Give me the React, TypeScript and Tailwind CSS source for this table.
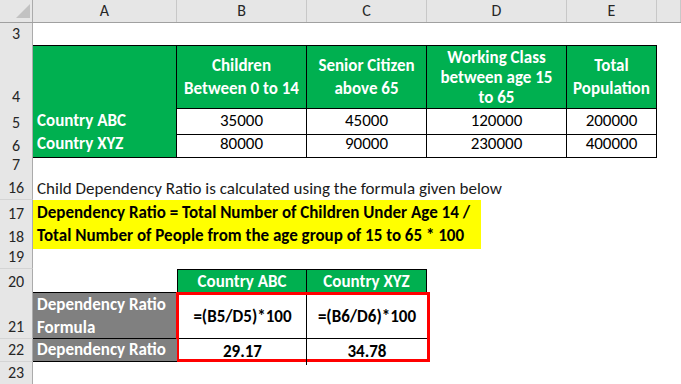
const COLS = 'grid grid-cols-[33px_144px_130px_120px_140px_90px_1fr]';
const FONT = "font-['Carlito','Lato',sans-serif]";

function RowNum({ n, className = '' }: { n?: string; className?: string }) {
  return (
    <div className={`flex items-end justify-center bg-[#e6e6e6] border-r border-b border-r-[#ababab] border-b-[#d4d4d4] text-[16px] leading-[22px] text-[#262626] ${className}`}>
      {n}
    </div>
  );
}

function Green({ children, className = '' }: { children?: React.ReactNode; className?: string }) {
  return (
    <div className={`flex items-center justify-center text-center bg-[#00b050] text-white font-bold border-r border-b border-black leading-[23px] ${className}`}>
      {children}
    </div>
  );
}

function Num({ children }: { children: React.ReactNode }) {
  return <div className="flex items-center justify-center border-r border-b border-black text-black">{children}</div>;
}

export default function App() {
  return (
    <div className={`w-[681px] h-[384px] overflow-hidden bg-white text-[17px] ${FONT}`}>
      {/* column headers */}
      <div className={`${COLS} h-[23px] bg-[#e6e6e6] border-b border-[#a0a0a0] text-[16px] leading-[22px] text-[#262626]`}>
        <div className="relative border-r border-[#ababab]">
          <svg width="33" height="22" className="absolute left-0 top-0">
            <polygon points="30,4 30,18 16,18" fill="#c2c2c2" />
          </svg>
        </div>
        {['A', 'B', 'C', 'D', 'E', ''].map((c, i) => (
          <div key={i} className="flex items-center justify-center border-r border-[#c8c8c8]">
            {c}
          </div>
        ))}
      </div>

      {/* row 3 */}
      <div className={`${COLS} h-[22px]`}>
        <RowNum n="3" />
      </div>

      {/* row 4 */}
      <div className={`${COLS} h-[63px]`}>
        <RowNum n="4" className="leading-[20px]" />
        <Green className="border-t" />
        <Green className="border-t">
          Children
          <br />
          Between 0 to 14
        </Green>
        <Green className="border-t">
          Senior Citizen
          <br />
          above 65
        </Green>
        <Green className="border-t !leading-[20px] pt-[2px]">
          Working Class
          <br />
          between age 15
          <br />
          to 65
        </Green>
        <Green className="border-t">
          Total
          <br />
          Population
        </Green>
      </div>

      {/* rows 5-6 */}
      {[
        ['5', 'Country ABC', '35000', '45000', '120000', '200000'],
        ['6', 'Country XYZ', '80000', '90000', '230000', '400000'],
      ].map((r) => (
        <div key={r[0]} className={`${COLS} h-[23px]`}>
          <RowNum n={r[0]} />
          <Green className="!justify-start pl-[4px]">{r[1]}</Green>
          <Num>{r[2]}</Num>
          <Num>{r[3]}</Num>
          <Num>{r[4]}</Num>
          <Num>{r[5]}</Num>
        </div>
      ))}

      {/* row 7, rows 8-15 hidden */}
      <div className={`${COLS} h-[22px]`}>
        <RowNum n="7" className="border-b-4 border-double !border-b-[#a6a6a6] leading-[19px]" />
      </div>

      {/* row 16 */}
      <div className={`${COLS} h-[24px]`}>
        <RowNum n="16" />
        <div className="col-span-6 flex items-end pl-[4px] leading-[23px] text-[#1a1a1a] whitespace-nowrap">
          Child Dependency Ratio is calculated using the formula given below
        </div>
      </div>

      {/* rows 17-18 */}
      {[
        ['17', 'Dependency Ratio = Total Number of Children Under Age 14 /'],
        ['18', 'Total Number of People from the age group of 15 to 65 * 100'],
      ].map((r) => (
        <div key={r[0]} className={`${COLS} h-[23px]`}>
          <RowNum n={r[0]} />
          <div className="col-span-6 flex">
            <div className="w-[448px] flex items-center pl-[4px] bg-[#ffff00] font-bold text-black whitespace-nowrap">{r[1]}</div>
          </div>
        </div>
      ))}

      {/* row 19 */}
      <div className={`${COLS} h-[23px]`}>
        <RowNum n="19" />
      </div>

      {/* row 20 */}
      <div className={`${COLS} h-[23px]`}>
        <RowNum n="20" />
        <div />
        <Green className="border-t border-l">Country ABC</Green>
        <Green className="border-t">Country XYZ</Green>
      </div>

      {/* rows 21-22 */}
      <div className="grid grid-cols-[33px_144px_253px_1fr] grid-rows-[47px_23px]">
        <RowNum n="21" />
        <div className="flex items-center pl-[4px] bg-[#808080] text-white font-bold border-t border-b border-black leading-[23px]">
          <div>
            Dependency Ratio
            <br />
            Formula
          </div>
        </div>
        <div className="row-span-2 -ml-px border-[3px] border-[#ff0000] grid grid-cols-[128px_1fr] grid-rows-[44px_1fr] font-bold text-black">
          <div className="flex items-center justify-center border-r border-b border-black">=(B5/D5)*100</div>
          <div className="flex items-center justify-center border-b border-black">=(B6/D6)*100</div>
          <div className="flex items-center justify-center border-r border-black">29.17</div>
          <div className="flex items-center justify-center">34.78</div>
        </div>
        <div className="row-span-2" />
        <RowNum n="22" />
        <div className="flex items-center pl-[4px] bg-[#808080] text-white font-bold border-b border-black">Dependency Ratio</div>
      </div>

      {/* row 23 */}
      <div className={`${COLS} h-[22px]`}>
        <RowNum n="23" />
      </div>
    </div>
  );
}
